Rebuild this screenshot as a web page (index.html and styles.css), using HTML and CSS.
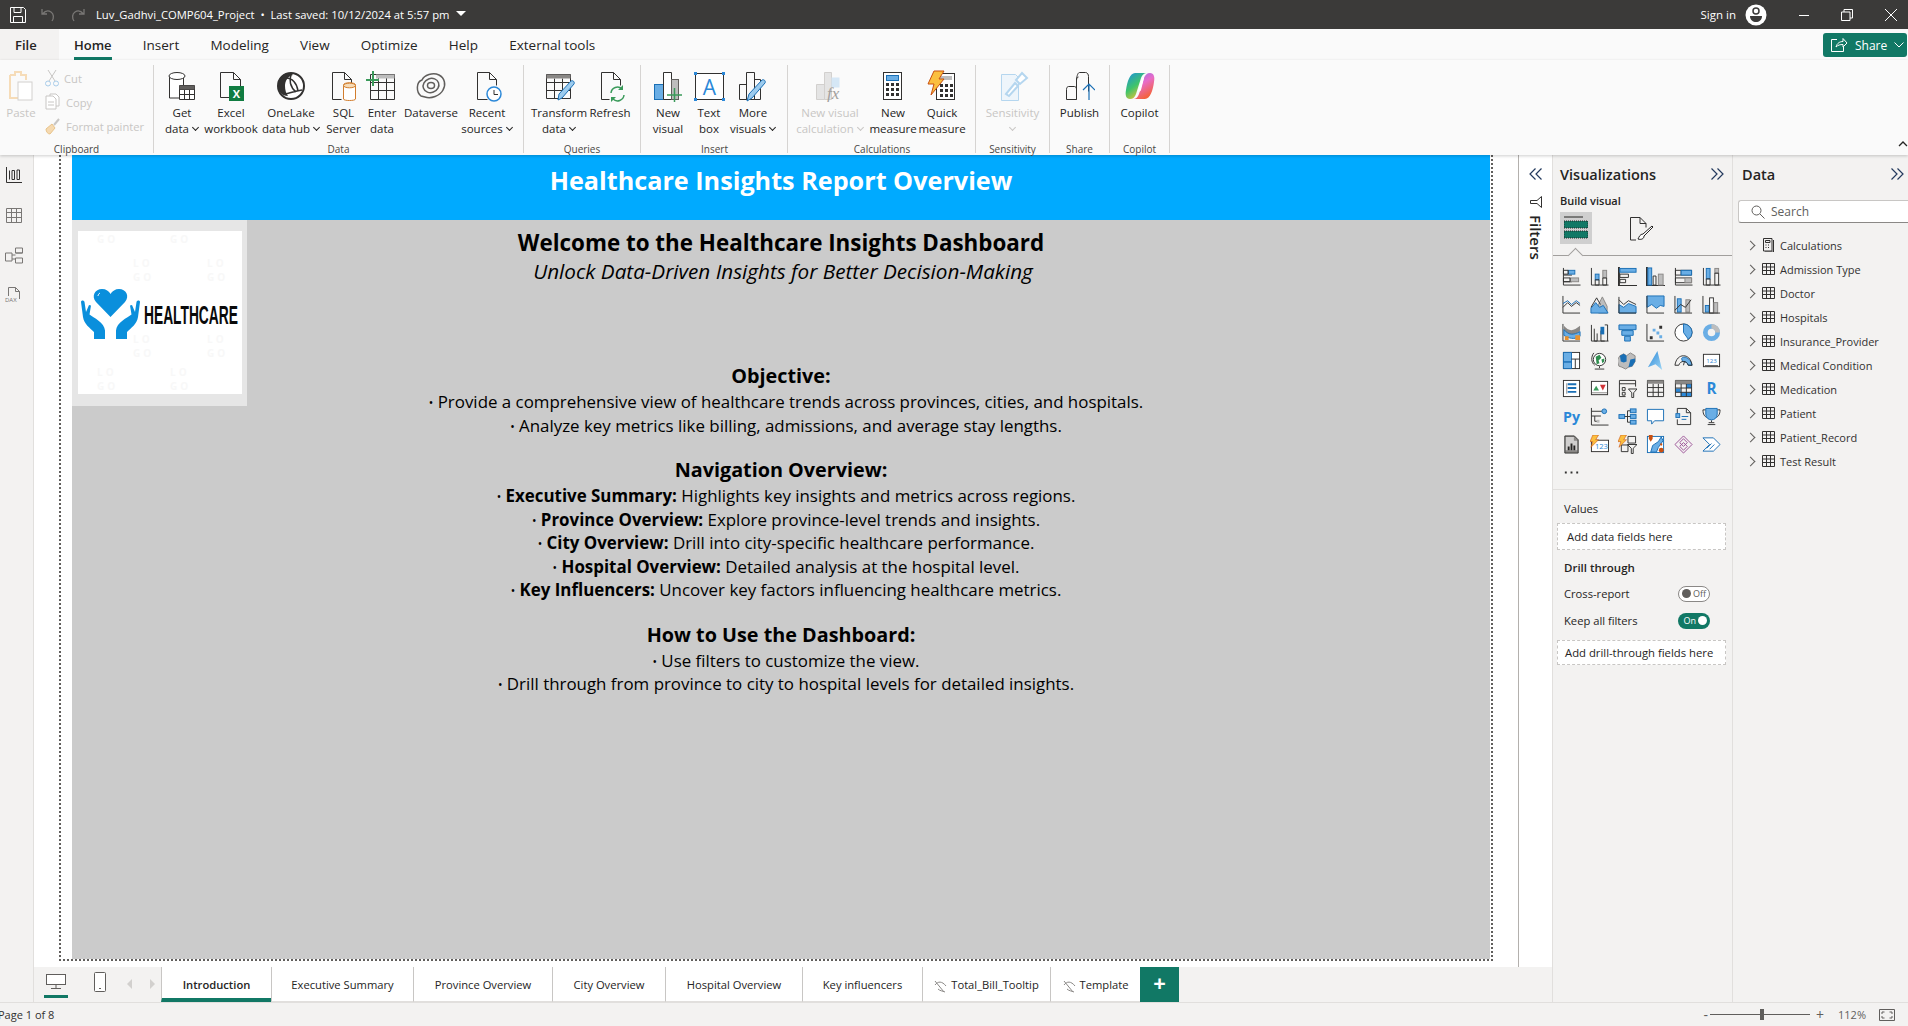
FILE: index.html
```html
<!DOCTYPE html>
<html lang="en">
<head>
    <meta charset="UTF-8">
    <title>Luv_Gadhvi_COMP604_Project</title>
    <link rel="stylesheet" href="styles.css">
</head>
<body>
<header class="titlebar">
    <svg class="tb-icon" width="18" height="18" viewBox="0 0 18 18"><path class="w" d="M1.5 1.5h13l2 2v13h-15zM5 1.5v5h7v-5M4.500 16.500v-6h9v6"/></svg>
    <svg class="tb-icon dim" width="18" height="18" viewBox="0 0 18 18"><path class="d" d="M3 3v5h5M3.500 8C6 5 9 4 12 6c3 2 3 6 1 9"/></svg>
    <svg class="tb-icon dim" width="18" height="18" viewBox="0 0 18 18"><path class="d" d="M15 3v5h-5M14.500 8C12 5 9 4 6 6c-3 2-3 6-1 9"/></svg>
    <span class="doc-title">Luv_Gadhvi_COMP604_Project &nbsp;•&nbsp; Last saved: 10/12/2024 at 5:57 pm</span>
    <span class="doc-caret"></span>
    <span class="sign-in">Sign in</span>
    <svg class="avatar" width="22" height="22" viewBox="0 0 22 22"><circle cx="11" cy="11" r="10.500" fill="#fff"/><circle cx="11" cy="7" r="3" fill="none" stroke="#3b3a39" stroke-width="1.500"/><path d="M5 12h12c0 4-3 6-6 6s-6-2-6-6z" fill="#3b3a39"/></svg>
    <div class="win-btns">
        <svg width="12" height="12" viewBox="0 0 12 12"><path class="w" d="M1 6.500h10"/></svg>
        <svg width="12" height="12" viewBox="0 0 12 12"><path class="w" d="M.5 3h8.500v8.500h-8.500zM3 3V.5h8.500V9H9"/></svg>
        <svg width="14" height="14" viewBox="0 0 14 14"><path class="w" d="M1 1l12 12M13 1L1 13"/></svg>
    </div>
</header>

<nav class="menu">
    <span class="menu-item file">File</span>
    <span class="menu-item active">Home</span>
    <span class="menu-item">Insert</span>
    <span class="menu-item">Modeling</span>
    <span class="menu-item">View</span>
    <span class="menu-item">Optimize</span>
    <span class="menu-item">Help</span>
    <span class="menu-item">External tools</span>
    <button class="share">
        <svg width="18" height="16" viewBox="0 0 18 16"><path class="w" d="M7 2.500H1.500v12h12V10M6 10c1-4 4-5.500 7-5.500V1.500l4 4.500-4 4V7.500C10 7.500 8 8 6 10z"/></svg>
        Share
        <svg width="10" height="6" viewBox="0 0 10 6"><path class="w" d="M.5.500L5 5 9.500.500"/></svg>
    </button>
</nav>

<section class="ribbon">
    <div class="group g-clip">
        <div class="g-row">
            <div class="rb off w42">
                <svg class="ri" width="32" height="32" viewBox="0 0 32 32"><path fill="none" stroke="#f6dcb8" stroke-width="2" d="M5 5h5V2h6v3h5v5M5 5v23h8"/><rect x="13" y="12" width="14" height="18" fill="#fff" stroke="#d2d0ce"/></svg>
                <span>Paste</span>
            </div>
            <div class="clip-col">
                <div class="clip-item"><svg width="14" height="18" viewBox="0 0 14 18"><path fill="none" stroke="#c8c6c4" d="M3 1l7 11M11 1L4 12"/><circle cx="3" cy="14.500" r="2.500" fill="none" stroke="#a9cdea"/><circle cx="11" cy="14.500" r="2.500" fill="none" stroke="#a9cdea"/></svg>Cut</div>
                <div class="clip-item"><svg width="16" height="18" viewBox="0 0 16 18"><path fill="#fff" stroke="#c8c6c4" d="M1 3h7l3 3v10H1zM5 3V1h6l3 3v9h-3M3 9h6M3 12h6"/></svg>Copy</div>
                <div class="clip-item"><svg width="16" height="18" viewBox="0 0 16 18"><path fill="#f5d9b0" stroke="#e8c38a" d="M1 12l6-5 3 4-5 6c-2 0-4-2-4-5z"/><path fill="none" stroke="#c8c6c4" stroke-width="2" d="M9 8l5-6"/></svg>Format painter</div>
            </div>
        </div>
        <div class="g-label">Clipboard</div>
    </div>

    <div class="group g-data">
        <div class="g-row">
            <div class="rb w44">
                <svg class="ri" width="32" height="32" viewBox="0 0 32 32"><path class="k fw" d="M3.500 6v22h14V6"/><ellipse class="k fw" cx="11" cy="6" rx="8" ry="3.500"/><path class="k fw" d="M13.500 15.500h15v14h-15zM13.500 19.500h15M18.500 19.500v10M23.500 19.500v10M13.500 24.500h15"/><path d="M13.500 15.500h15v4h-15z" fill="#605e5c"/></svg>
                <span>Get<br>data <i class="chev"></i></span>
            </div>
            <div class="rb w54">
                <svg class="ri" width="32" height="32" viewBox="0 0 32 32"><path class="k" stroke="#8a8886" d="M5.500 2.500h13l7 7v13M5.500 2.500v25h9M18.500 2.500v7h7"/><rect x="14" y="16" width="15" height="15" fill="#107c41"/><text class="xl" x="21.500" y="28">X</text></svg>
                <span>Excel<br>workbook</span>
            </div>
            <div class="rb w66">
                <svg class="ri" width="32" height="32" viewBox="0 0 32 32"><circle cx="16" cy="16" r="13" fill="#fff" stroke="#323130" stroke-width="2"/><path d="M3 16C3 9 8 3 14 3c2 0 3 1 4 2-5 1-8 6-8 11 0 4 1 7 3 10C7 26 3 21 3 16z" fill="#323130"/><path d="M11 8c6 0 11 5 12 13M10 24c5-1 10-3 17-4M16 5c-2 5-1 12 5 17" fill="none" stroke="#323130" stroke-width="1.500"/></svg>
                <span>OneLake<br>data hub <i class="chev"></i></span>
            </div>
            <div class="rb w39">
                <svg class="ri" width="32" height="32" viewBox="0 0 32 32"><path class="k" d="M4.500 2.500h12l7 7v6M4.500 2.500v27h9M16.500 2.500v7h7"/><path fill="#fff" stroke="#d27d2d" d="M15.500 15c0-3 12-3 12 0v14c0 2-12 2-12 0z"/><ellipse cx="21.500" cy="15.500" rx="6" ry="2.300" fill="#f6dcb8" stroke="#d27d2d"/></svg>
                <span>SQL<br>Server</span>
            </div>
            <div class="rb w38">
                <svg class="ri" width="32" height="32" viewBox="0 0 32 32"><path class="k" d="M4.500 4.500h24v25h-24zM4.500 12.500h24M4.500 20.500h24M12.500 4.500v25M20.500 4.500v25"/><path d="M10 4.500h18.500v4H10z" fill="#bdbdbd"/><path d="M0 10h13M7 1v15" stroke="#3a9a5a" stroke-width="2"/></svg>
                <span>Enter<br>data</span>
            </div>
            <div class="rb w60">
                <svg class="ri" width="32" height="32" viewBox="0 0 32 32"><g fill="none" stroke="#605e5c" stroke-width="1.500"><path d="M6 26C1 22 1 12 7 10 9 5 18 2 24 5c6 3 7 10 4 15-3 6-12 9-18 7z"/><ellipse cx="16" cy="15.500" rx="8" ry="7" transform="rotate(-20 16 15.500)"/><ellipse cx="16" cy="15.500" rx="3.500" ry="3"/></g></svg>
                <span>Dataverse</span>
            </div>
            <div class="rb w52">
                <svg class="ri" width="32" height="32" viewBox="0 0 32 32"><path class="k" d="M6.500 2.500h12l7 7v6M6.500 2.500v27h10M18.500 2.500v7h7"/><circle cx="23" cy="24" r="7" fill="#fff" stroke="#2b88d8" stroke-width="1.500"/><path class="k" d="M23 20v4.500h4"/></svg>
                <span>Recent<br>sources <i class="chev"></i></span>
            </div>
        </div>
        <div class="g-label">Data</div>
    </div>

    <div class="group g-query">
        <div class="g-row">
            <div class="rb w58">
                <svg class="ri" width="32" height="32" viewBox="0 0 32 32"><path class="k" d="M3.500 4.500h24v24h-24zM3.500 12.500h24M3.500 20.500h24M11.500 8.500v20M19.500 8.500v20"/><path d="M3.500 4.500h24v4h-24z" fill="#8a8886"/><path d="M15 30l1-6L28 11c2-1 4 1 3 3L19 28z" fill="#9ccbee" stroke="#1a6fb5"/></svg>
                <span>Transform<br>data <i class="chev"></i></span>
            </div>
            <div class="rb w44">
                <svg class="ri" width="32" height="32" viewBox="0 0 32 32"><path class="k" d="M7.500 2.500h12l7 7v6M7.500 2.500v27h8M19.500 2.500v7h7"/><path fill="none" stroke="#3a9a5a" stroke-width="1.500" d="M17 23a6.500 6.500 0 0 1 11-4M30 25a6.500 6.500 0 0 1-11 4"/><path fill="#3a9a5a" d="M29 15v5h-5zM17 32v-5h5z"/></svg>
                <span>Refresh</span>
            </div>
        </div>
        <div class="g-label">Queries</div>
    </div>

    <div class="group g-insert">
        <div class="g-row">
            <div class="rb w40">
                <svg class="ri" width="32" height="32" viewBox="0 0 32 32"><rect x="2.500" y="14.500" width="9" height="15" fill="#6aaee5" stroke="#1a6fb5"/><path fill="#fff" stroke="#323130" d="M11.500 2.500h8v27h-8z"/><rect x="19.500" y="9.500" width="7" height="20" fill="#bdbdbd" stroke="#605e5c"/><path d="M15 25h15M22.500 18v14" stroke="#3a9a5a" stroke-width="1.500"/></svg>
                <span>New<br>visual</span>
            </div>
            <div class="rb w42">
                <svg class="ri" width="32" height="32" viewBox="0 0 32 32"><rect x="2.500" y="3.500" width="28" height="26" fill="#fff" stroke="#323130"/><path d="M1 2h3v3H1zM29 2h3v3h-3zM1 28h3v3H1zM29 28h3v3h-3z" fill="#2b88d8"/><text class="tbA" x="16.500" y="25">A</text></svg>
                <span>Text<br>box</span>
            </div>
            <div class="rb w46">
                <svg class="ri" width="32" height="32" viewBox="0 0 32 32"><path class="k" d="M2.500 14.500h7v15h-7zM9.500 2.500h8v27h-8zM17.500 9.500h6v20h-6z"/><path d="M10 31l2-7L25 10c2-1 4 1 3 3L15 28z" fill="#9ccbee" stroke="#1a6fb5"/></svg>
                <span>More<br>visuals <i class="chev"></i></span>
            </div>
        </div>
        <div class="g-label">Insert</div>
    </div>

    <div class="group g-calc">
        <div class="g-row">
            <div class="rb off w70">
                <svg class="ri" width="32" height="32" viewBox="0 0 32 32"><path fill="#e4e4e4" stroke="#d2d0ce" d="M2.500 14.500h8v15h-8zM10.500 2.500h7v27h-7z"/><path fill="#d5e7f6" d="M17.500 7.500h8v10h-8z"/><text class="fx" x="13" y="29">fx</text></svg>
                <span>New visual<br>calculation <i class="chev"></i></span>
            </div>
            <div class="rb w56">
                <svg class="ri" width="32" height="32" viewBox="0 0 32 32"><rect x="6.500" y="2.500" width="18" height="27" fill="#fff" stroke="#323130"/><rect x="9.500" y="5.500" width="12" height="5" fill="#6aaee5" stroke="#1a6fb5"/><path d="M9 13h3v3H9zM14 13h3v3h-3zM19 13h3v3h-3zM9 18h3v3H9zM14 18h3v3h-3zM19 18h3v3h-3zM9 23h3v3H9zM14 23h3v3h-3zM19 23h3v3h-3z" fill="#323130"/></svg>
                <span>New<br>measure</span>
            </div>
            <div class="rb w42">
                <svg class="ri" width="32" height="32" viewBox="0 0 32 32"><rect x="10.500" y="3.500" width="18" height="26" fill="#fff" stroke="#323130"/><rect x="13" y="6" width="13" height="4" fill="#bdbdbd"/><path d="M14 14h3v3h-3zM19 14h3v3h-3zM24 14h3v3h-3zM14 19h3v3h-3zM19 19h3v3h-3zM24 19h3v3h-3zM14 24h3v3h-3zM19 24h3v3h-3zM24 24h3v3h-3z" fill="#323130"/><path d="M8 1h10l-5 8h5L5 25l3-11H2z" fill="#fbbf3f" stroke="#ca5010"/></svg>
                <span>Quick<br>measure</span>
            </div>
        </div>
        <div class="g-label">Calculations</div>
    </div>

    <div class="group g-sens">
        <div class="g-row">
            <div class="rb off">
                <svg class="ri" width="32" height="32" viewBox="0 0 32 32"><path fill="#eef5fb" stroke="#b5d6ef" d="M4.500 4.500h14l3 3v23h-17z"/><path fill="#fff" stroke="#b5d6ef" stroke-width="2" d="M9 24l9-11 3 3-9 10zM19 10l6-7 5 5-7 6z"/></svg>
                <span>Sensitivity<br><i class="chev"></i></span>
            </div>
        </div>
        <div class="g-label">Sensitivity</div>
    </div>

    <div class="group g-share">
        <div class="g-row">
            <div class="rb">
                <svg class="ri" width="32" height="32" viewBox="0 0 32 32"><path class="k" d="M3.500 19.500c0-2 1-3 2-3h6c1 0 2 1 2 3v10h-10zM13.500 29.500V10c0-2 1-3 2-3M13.500 10c0-2 1-7.500 3-7.500h6c2 0 3 2 3 4v15"/><path d="M26 30V14M20 20l6-6 6 6" fill="none" stroke="#1a6fb5" stroke-width="1.200"/></svg>
                <span>Publish</span>
            </div>
        </div>
        <div class="g-label">Share</div>
    </div>

    <div class="group g-copilot">
        <div class="g-row">
            <div class="rb">
                <svg class="ri" width="32" height="32" viewBox="0 0 32 32"><defs><linearGradient id="cpa" x1="0" y1="0" x2="0.600" y2="1"><stop offset="0" stop-color="#1b8fe0"/><stop offset=".55" stop-color="#3fc46b"/><stop offset="1" stop-color="#f2c230"/></linearGradient><linearGradient id="cpb" x1="0" y1="0" x2="0.500" y2="1"><stop offset="0" stop-color="#8a6df0"/><stop offset=".5" stop-color="#e86cc8"/><stop offset="1" stop-color="#f4623c"/></linearGradient></defs><path d="M11 3h12c-3 0-5 2-6 5l-5 16c-1 3-3 5-6 5-4 0-5-4-4-9 1-8 4-17 9-17z" fill="url(#cpa)"/><path d="M21 29H9c3 0 5-2 6-5l5-16c1-3 3-5 6-5 4 0 5 4 4 9-1 8-4 17-9 17z" fill="url(#cpb)"/><path d="M14 21l4-12c.5-1.500 2-2 2-1l-3 12c-.5 1.500-3 2.500-3 1z" fill="#fff"/></svg>
                <span>Copilot</span>
            </div>
        </div>
        <div class="g-label">Copilot</div>
    </div>

    <svg class="collapse" width="10" height="6" viewBox="0 0 10 6"><path d="M1 5l4-4 4 4" fill="none" stroke="#252423" stroke-width="1.300"/></svg>
</section>

<main class="workspace">
    <aside class="rail">
        <svg width="18" height="18" viewBox="0 0 18 18"><path class="k" stroke="#252423" d="M1.500 1v15.500H17M4.500 4.500v9M7 4.500h2.500v9H7zM12 4h2.500v9.500H12z"/></svg>
        <svg width="18" height="18" viewBox="0 0 18 18"><path class="gr" d="M1.500 2.500h15v14h-15zM1.500 6.500h15M1.500 11.500h15M6.500 2.500v14M11.500 2.500v14"/></svg>
        <svg width="18" height="18" viewBox="0 0 18 18"><path class="gr" d="M.5 7h6.500v8H.5zM10.500 2h7v5h-7zM10.500 7h7M10.500 12h7v5h-7zM7 9h3.500M7 13h3.500"/></svg>
        <svg width="18" height="18" viewBox="0 0 18 18"><path class="gr" d="M3.500 10V1.500h7l4 4V13M10.500 1.500v4h4"/><text class="dax" x="0" y="15.500">DAX</text></svg>
    </aside>

    <div class="center">
        <div class="upper">
            <div class="canvas">
                <div class="page-frame">
                    <div class="page">
                        <div class="page-title">Healthcare Insights Report Overview</div>
                        <div class="logo-box">
                            <svg width="164" height="163" viewBox="0 0 164 163">
                                <rect width="164" height="163" fill="#fff"/>
                                <g class="mark">
                                    <text x="19" y="12">GO</text><text x="92" y="12">GO</text>
                                    <text x="55" y="36">LO</text><text x="129" y="36">LO</text>
                                    <text x="55" y="50">GO</text><text x="129" y="50">GO</text>
                                    <text x="55" y="112">LO</text><text x="129" y="112">LO</text>
                                    <text x="55" y="126">GO</text><text x="129" y="126">GO</text>
                                    <text x="19" y="145">LO</text><text x="92" y="145">LO</text>
                                    <text x="19" y="159">GO</text><text x="92" y="159">GO</text>
                                </g>
                                <path d="M32.500 86L18 71c-5-6-1-13 6-13 4 0 7 2 8.500 5 1.500-3 5-5 8.500-5 7 0 11 7 6 13z" fill="#0a8fdc"/>
                                <path d="M22 62c-1 .5-2 2-2 3" stroke="#fff" fill="none"/>
                                <path d="M3 71c0-2 3-2 3.500 0L8 81l3-7 2 .5-1.500 9c4 3 15 8 15.500 16v8.500H16V101C12 97 6 93 5 86z" fill="#0a8fdc"/>
                                <path d="M62 71c0-2-3-2-3.500 0L57 81l-3-7-2 .5 1.500 9c-4 3-15 8-15.500 16v8.500h11V101c4-4 10-8 11-15z" fill="#0a8fdc"/>
                                <text class="logo-word" transform="translate(66 93) scale(.53 1)">HEALTHCARE</text>
                            </svg>
                        </div>
                        <div class="intro">
                            <h1>Welcome to the Healthcare Insights Dashboard</h1>
                            <p class="tagline">Unlock Data-Driven Insights for Better Decision-Making</p>
                            <h2 class="objective">Objective:</h2>
                            <p><span class="dot">•</span> Provide a comprehensive view of healthcare trends across provinces, cities, and hospitals.</p>
                            <p><span class="dot">•</span> Analyze key metrics like billing, admissions, and average stay lengths.</p>
                            <h2>Navigation Overview:</h2>
                            <p><span class="dot">•</span> <b>Executive Summary:</b> Highlights key insights and metrics across regions.</p>
                            <p><span class="dot">•</span> <b>Province Overview:</b> Explore province-level trends and insights.</p>
                            <p><span class="dot">•</span> <b>City Overview:</b> Drill into city-specific healthcare performance.</p>
                            <p><span class="dot">•</span> <b>Hospital Overview:</b> Detailed analysis at the hospital level.</p>
                            <p><span class="dot">•</span> <b>Key Influencers:</b> Uncover key factors influencing healthcare metrics.</p>
                            <h2>How to Use the Dashboard:</h2>
                            <p><span class="dot">•</span> Use filters to customize the view.</p>
                            <p><span class="dot">•</span> Drill through from province to city to hospital levels for detailed insights.</p>
                        </div>
                    </div>
                </div>
            </div>
            <div class="filters">
                <svg width="14" height="12" viewBox="0 0 14 12"><path class="nv" d="M6.500.5L1 6l5.500 5.500M12.500.5L7 6l5.500 5.500"/></svg>
                <svg class="funnel" width="14" height="14" viewBox="0 0 14 14"><path class="k" stroke="#252423" d="M12.500 1.500v11L8 8.500H1.500v-3H8z"/></svg>
                <span class="filters-text">Filters</span>
            </div>
        </div>
        <div class="pagebar">
            <div class="pagebar-tools">
                <span class="device on"><svg width="20" height="15" viewBox="0 0 20 15"><rect x=".5" y=".5" width="19" height="10" fill="#fff" stroke="#605e5c"/><path d="M10 10.500V14M5 14.500h10" stroke="#605e5c"/></svg></span>
                <span class="device phone"><svg width="12" height="20" viewBox="0 0 12 20"><rect x=".5" y=".5" width="11" height="19" rx="1" fill="#fff" stroke="#605e5c"/><path d="M5 16h2v1H5z" fill="#605e5c"/></svg></span>
                <span class="nav-tri left"></span>
                <span class="nav-tri right"></span>
            </div>
            <div class="ptab t1 active">Introduction</div>
            <div class="ptab t2">Executive Summary</div>
            <div class="ptab t3">Province Overview</div>
            <div class="ptab t4">City Overview</div>
            <div class="ptab t5">Hospital Overview</div>
            <div class="ptab t6">Key influencers</div>
            <div class="ptab t7"><svg class="hid" width="13" height="13" viewBox="0 0 13 13"><path d="M1 5c3-4 7-4 11 1M1 1l9 11M4 9c2 2 5 2 7 3" fill="none" stroke="#8a8886"/></svg>Total_Bill_Tooltip</div>
            <div class="ptab t8"><svg class="hid" width="13" height="13" viewBox="0 0 13 13"><path d="M1 5c3-4 7-4 11 1M1 1l9 11M4 9c2 2 5 2 7 3" fill="none" stroke="#8a8886"/></svg>Template</div>
            <div class="ptab-add">+</div>
        </div>
    </div>

    <aside class="viz">
        <div class="pane-head">
            <span>Visualizations</span>
            <svg width="14" height="12" viewBox="0 0 14 12"><path class="nv" d="M1.500.5L7 6l-5.500 5.500M7.500.5L13 6l-5.500 5.500"/></svg>
        </div>
        <div class="build-label">Build visual</div>
        <div class="build-tabs">
            <span class="bt on"><svg width="24" height="24" viewBox="0 0 24 24"><path d="M0 1h19" stroke="#252423"/><rect y="5" width="24" height="7" fill="#117865" stroke="#252423" stroke-dasharray="1 1"/><rect y="15" width="24" height="7" fill="#117865" stroke="#252423" stroke-dasharray="1 1"/></svg></span>
            <span class="bt"><svg width="25" height="25" viewBox="0 0 25 25"><path class="k" stroke="#252423" d="M1.500 24V1.500H11l6 6v4M11 1.500v6h6M1.500 24H7"/><path d="M9 23c3 1 6 0 6-3l9-9-1-1-9 8c-3 0-4 3-5 5z" fill="#fff" stroke="#252423"/></svg></span>
        </div>
        <div class="build-rule"><span class="notch"></span></div>
        <div class="viz-grid">
            <!-- bars -->
            <svg viewBox="0 0 20 20"><path class="k" d="M1.500 1v18h18M1.500 8.500h9M1.500 15.500h9"/><rect class="bl" x="6.500" y="3.500" width="7" height="4"/><rect class="gy" x="8.500" y="11.500" width="9" height="4"/><path class="k" d="M1.500 3.500h5v4h-5zM1.500 11.500h7v4h-7z"/></svg>
            <svg viewBox="0 0 20 20"><path class="k" d="M1.500 1v18h18"/><rect class="bl" x="5.500" y="7.500" width="4" height="6"/><path class="k" d="M5.500 13.500h4v5.500h-4z"/><rect class="gy" x="13.500" y="3.500" width="4" height="8"/><path class="k" d="M13.500 11.500h4v7.500h-4z"/></svg>
            <svg viewBox="0 0 20 20"><path class="k" stroke="#8a8886" stroke-width="2" d="M1 0v20h20"/><rect class="bl" x="2" y="1.500" width="17" height="4"/><path class="k" d="M2 7.500h9v3.500H2zM2 13h6v3.500H2z"/></svg>
            <svg viewBox="0 0 20 20"><path class="k" stroke="#8a8886" stroke-width="2" d="M1 0v20h20"/><rect class="bl" x="2" y="1" width="4" height="18"/><path class="k" d="M7.500 9.500h3v9.500h-3z"/><rect class="gy" x="13" y="7.500" width="5" height="11.500"/></svg>
            <svg viewBox="0 0 20 20"><path class="k" d="M1.500 1v18h18M1.500 3.500h17v5h-17zM1.500 11.500h17v5h-17zM7.500 3.500v5"/><rect class="bl" x="7.500" y="3.500" width="11" height="5"/><rect class="gy" x="11.500" y="11.500" width="7" height="5"/></svg>
            <svg viewBox="0 0 20 20"><path class="k" d="M1.500 1v18h18"/><rect class="bl" x="4.500" y="1.500" width="4" height="11"/><path class="k" d="M4.500 12.500h4v6.500h-4z"/><rect class="gy" x="13.500" y="1.500" width="4" height="5"/><path class="k" d="M13.500 6.500h4v12.500h-4z"/></svg>
            <!-- lines and areas -->
            <svg viewBox="0 0 20 20"><path class="k" d="M1 1v18h18M1 13l5-5 4 4 5-4 4 3"/><path d="M1 9l5-3 4 4 5-4 4 3" fill="none" stroke="#1a6fb5"/></svg>
            <svg viewBox="0 0 20 20"><path class="gy" d="M9 10l4-8 5 10v7H9z"/><path class="bl" d="M1 19v-5l5-6 4 5 4-2 5 8z"/><path class="k" d="M1 13l6-10 4 7"/></svg>
            <svg viewBox="0 0 20 20"><path class="bl" d="M1 10l5 3 5-4 8 3v7H1z"/><path class="k" d="M1 2v17h18M1 5l5 5 5-4 8 4" stroke="#1a6fb5"/></svg>
            <svg viewBox="0 0 20 20"><path class="bl" d="M1 1h18v11l-4-1-4 3-5-4-5 3z"/><path class="k" d="M1 1v18h18"/></svg>
            <svg viewBox="0 0 20 20"><rect class="bl" x="3.500" y="4" width="4" height="14"/><rect class="gy" x="12.500" y="5" width="4" height="13"/><path class="k" d="M1 1v18h18M1 16l6-6 5 3 6-8"/></svg>
            <svg viewBox="0 0 20 20"><rect class="bl" x="3.500" y="11" width="4" height="7"/><rect x="8" y="3" width="4" height="16" fill="#fff" stroke="#323130"/><rect class="gy" x="12.500" y="8" width="4" height="11"/><path class="k" d="M1 1v18h18"/></svg>
            <!-- ribbon, waterfall, funnel, scatter, pie, donut -->
            <svg viewBox="0 0 20 20"><path class="k" d="M1 1v18h18"/><path d="M2 3c5 6 10 6 17 0v5C13 15 7 13 2 8z" fill="#8a8886"/><path class="bl" d="M2 7c5 6 10 6 17 2v5c-6 4-12 2-17-1z"/><path d="M3 14h4v4H3zM14 13h5v5h-5z" fill="#e8912d"/></svg>
            <svg viewBox="0 0 20 20"><path class="k" d="M1.500 2v17h18M4.500 6v13h3M7.500 11v8M11.500 8v11h4M15.500 2h3v17"/><rect x="11" y="4" width="4" height="8" fill="#1a6fb5"/></svg>
            <svg viewBox="0 0 20 20"><path class="bl" d="M1 2h18v5H1zM4 8h12v5H4zM7 14h6v5H7z"/></svg>
            <svg viewBox="0 0 20 20"><path class="k" d="M1 1v18h18"/><path d="M14 3h3v3h-3zM4 14h3v3H4z" fill="#323130"/><path d="M7 6h3v3H7zM11 9h3v3h-3zM14 13h3v3h-3z" fill="#6aaee5"/></svg>
            <svg viewBox="0 0 20 20"><circle cx="10" cy="10" r="9" fill="#fff" stroke="#323130"/><path class="bl" d="M10 1a9 9 0 0 1 9 9 9 9 0 0 1-4 7l-5-7z"/></svg>
            <svg viewBox="0 0 20 20"><circle cx="10" cy="10" r="6.500" fill="none" stroke="#6aaee5" stroke-width="5"/><path d="M10 1a9 9 0 0 1 9 9h-5a4 4 0 0 0-4-4z" fill="#bdbdbd"/></svg>
            <!-- maps, gauge, card -->
            <svg viewBox="0 0 20 20"><rect x="1.500" y="1.500" width="17" height="17" fill="#fff" stroke="#323130"/><path class="bl" d="M1.500 1.500H10v10H1.500zM1.500 11.500H10v7H1.500z"/><path class="k" d="M10 8.500h8.500M14 8.500v10"/></svg>
            <svg viewBox="0 0 20 20"><circle cx="10" cy="9" r="6.500" fill="#fff" stroke="#323130"/><path d="M6 6l4-2 2 3-3 3 1 3-3 1zM12 9l3-1v3l-2 2z" fill="#2f8f4f"/><path class="k" d="M4 2c-3 4-3 10 1 13M10 16v2M5 19h10"/></svg>
            <svg viewBox="0 0 20 20"><path class="gy" d="M2 5l4-2 3 2 4-3 5 3v6l-3 5-4 1-3 2-4-2-3-1-2-6z"/><path d="M2 5l4-2 3 2v6l-3 1-3-1z" fill="#1a6fb5"/><path d="M13 9l5-1v3l-3 5-4 1z" fill="#1a6fb5"/></svg>
            <svg viewBox="0 0 20 20"><defs><linearGradient id="az" x1="0" y1="0" x2="1" y2="1"><stop offset="0" stop-color="#2b88d8"/><stop offset="1" stop-color="#9fd6f5"/></linearGradient></defs><path d="M12 0L2 17l8-3 7 6z" fill="url(#az)"/></svg>
            <svg viewBox="0 0 20 20"><path class="bl" d="M8 8c1-3 9-2 11 7h-4c-1-3-3-4-6-4z"/><path class="k" d="M1 15C2 8 6 5 10 5s8 3 9 10h-4c-1-3-3-4-5-4s-4 1-5 4zM10 15l1-4"/></svg>
            <svg viewBox="0 0 20 20"><rect x="1.500" y="3.500" width="17" height="13" fill="#fff" stroke="#323130"/><text class="num" x="10" y="13">123</text><path class="k" d="M3 15.500h14" stroke="#8a8886"/></svg>
            <!-- multi card, kpi, slicer, table, matrix, r -->
            <svg viewBox="0 0 20 20"><rect x="1.500" y="1.500" width="17" height="17" fill="#fff" stroke="#323130"/><path d="M5 4.500v11" stroke="#8a8886"/><path d="M6 5.500h9M6 9.500h9M6 13.500h9" stroke="#1a6fb5" stroke-width="2"/></svg>
            <svg viewBox="0 0 20 20"><rect x="1.500" y="2.500" width="17" height="14" fill="#fff" stroke="#323130"/><path d="M3.500 12l3-5 3 5z" fill="#3a9a5a"/><path d="M10.500 6h6l-3 6z" fill="#d13438"/><path d="M2 14.500h16" stroke="#8a8886"/></svg>
            <svg viewBox="0 0 20 20"><path class="k" d="M8 18.500H1.500v-17h17V8M1.500 5h17M4.500 9h3v3h-3zM4.500 14h3v3h-3zM11 10.500h9l-3.500 4v5H14.500v-5z"/></svg>
            <svg viewBox="0 0 20 20"><path class="k" d="M1.500 1.500h17v17h-17zM1.500 9h17M1.500 14h17M7.500 5v13.500M13 5v13.500"/><rect x="1.500" y="1.500" width="17" height="3.500" fill="#8a8886"/></svg>
            <svg viewBox="0 0 20 20"><path d="M13 5h5.500v4.500H13zM1.500 10h5.500v4H1.500zM7 14h6v4.500H7zM13 14h5.500v4.500H13z" fill="#2b88d8"/><path class="k" d="M1.500 1.500h17v17h-17zM1.500 5h17M1.500 9.500h17M1.500 14h17M7.500 5v13.500M13 5v13.500"/><rect x="1.500" y="1.500" width="17" height="3.500" fill="#8a8886"/></svg>
            <svg viewBox="0 0 20 20"><text class="lang" x="10" y="16">R</text></svg>
            <!-- py, influencers, tree, qna, narrative, goals -->
            <svg viewBox="0 0 20 20"><text class="lang py" x="10" y="16">Py</text></svg>
            <svg viewBox="0 0 20 20"><path class="k" d="M1.500 1v18h18M1.500 4.500h12M1.500 9.500h10M5 9.500V15h3"/><circle cx="15" cy="4.500" r="2.500" fill="#6aaee5" stroke="#1a6fb5"/><rect x="7" y="13.500" width="3" height="3" fill="#bdbdbd"/></svg>
            <svg viewBox="0 0 20 20"><rect class="bl" x="1" y="8" width="6" height="4"/><rect class="bl" x="13" y="2" width="6" height="4"/><rect class="bl" x="13" y="8" width="6" height="4"/><rect class="bl" x="13" y="14" width="6" height="4"/><path class="k" d="M7 10h6M10 4v12h3M10 4h3"/></svg>
            <svg viewBox="0 0 20 20"><path fill="#fff" stroke="#1a6fb5" d="M1.500 2.500h17v12H9l-3 3.500v-3.500H1.500z"/></svg>
            <svg viewBox="0 0 20 20"><path class="k" fill="#fff" d="M3.500 7V1.500H13L17.500 6v12.500h-14V13M13 1.500V6h4.500"/><rect class="bl" x="2" y="7" width="4" height="4"/><path d="M8 10h7M8 13h5" stroke="#1a6fb5"/></svg>
            <svg viewBox="0 0 20 20"><path class="k" d="M4 3H1c0 5 2 7 4 8M16 3h3c0 5-2 7-4 8M10 14v2M6 18.500h8M7 16.500h6"/><path class="bl" d="M4 1.500h12v6c0 4-3 6-6 6s-6-2-6-6z"/></svg>
            <!-- paginated, smart ones -->
            <svg viewBox="0 0 20 20"><path fill="#8a8886" stroke="#323130" d="M3 1h10l4 4v14H3z"/><path d="M4 4v12h12V6h-3.500V2H4z" fill="#fff" opacity=".6"/><path d="M6 16v-4h2v4zM9 16V9h2v7zM12 16v-5h2v5z" fill="#252423"/></svg>
            <svg viewBox="0 0 20 20"><rect x="1.500" y="5.500" width="18" height="12" fill="#fff" stroke="#323130"/><text class="num big" x="12" y="15">123</text><path d="M3 0h6L6 5h3L1 13l2-6H0z" fill="#fbbf3f" stroke="#ca5010" stroke-width=".6"/></svg>
            <svg viewBox="0 0 20 20"><path class="k" stroke="#8a8886" d="M10.500 1.500h8v7h-8zM3.500 10.500h7v7h-7z"/><path class="k" d="M10 10h10l-4 4v5.500h-2V14z"/><path d="M3 0h6L6 5h3L1 13l2-6H0z" fill="#fbbf3f" stroke="#ca5010" stroke-width=".6"/></svg>
            <svg viewBox="0 0 20 20"><rect x="1.500" y="1.500" width="17" height="17" fill="#fff" stroke="#1a6fb5"/><path class="bl" d="M5 18l2-7 6-4 3-5 2 4-5 7-2 5z"/><path d="M3 0h4v4l-2 3-2-3z" fill="#ca5010"/><circle cx="16" cy="16" r="2.500" fill="#ca5010"/><circle cx="16" cy="10" r="1.200" fill="#ca5010"/></svg>
            <svg viewBox="0 0 20 20"><path fill="none" stroke="#9b4f96" d="M10 1l9 9-9 9-9-9zM10 4L6 8l4 4 4-4zM10 8l-4 4 4 4 4-4z"/></svg>
            <svg viewBox="0 0 20 20"><path fill="#fff" stroke="#1a6fb5" d="M1 3h11l7 7-7 7H1l7-7zM5 14l5-5M8 15l5-5"/></svg>
            <svg class="dots" viewBox="0 0 20 20"><path d="M3 9h2v2H3zM9 9h2v2H9zM15 9h2v2h-2z" fill="#323130"/></svg>
        </div>
        <div class="wells">
            <div class="well-title">Values</div>
            <div class="well">Add data fields here</div>
            <div class="drill-title">Drill through</div>
            <div class="opt"><span>Cross-report</span><span class="toggle off"><i></i>Off</span></div>
            <div class="opt"><span>Keep all filters</span><span class="toggle on">On<i></i></span></div>
            <div class="well small">Add drill-through fields here</div>
        </div>
    </aside>

    <aside class="data">
        <div class="pane-head">
            <span>Data</span>
            <svg width="14" height="12" viewBox="0 0 14 12"><path class="nv" d="M1.500.5L7 6l-5.500 5.500M7.500.5L13 6l-5.500 5.500"/></svg>
        </div>
        <div class="search">
            <svg width="14" height="14" viewBox="0 0 14 14"><circle cx="5.500" cy="5.500" r="4.500" fill="none" stroke="#605e5c"/><path d="M9 9l4.500 4.500" stroke="#605e5c"/></svg>
            <span>Search</span>
        </div>
        <ul class="tables">
            <li><i class="tchev"></i><svg width="13" height="14" viewBox="0 0 13 14"><path class="k" d="M1.500.5h8.500v12.500H1.500zM3.500 2.500h4.500v2H3.500zM3.500 7h1M6 7h1M3.500 9.500h1M6 9.500h1M11.500 2v12H3"/></svg>Calculations</li>
            <li><i class="tchev"></i><svg width="13" height="12" viewBox="0 0 13 12"><path class="k" d="M.5.500h12v11H.5zM.5 4h12M.5 7.500h12M4.500.5v11M8.500.5v11"/></svg>Admission Type</li>
            <li><i class="tchev"></i><svg width="13" height="12" viewBox="0 0 13 12"><path class="k" d="M.5.500h12v11H.5zM.5 4h12M.5 7.500h12M4.500.5v11M8.500.5v11"/></svg>Doctor</li>
            <li><i class="tchev"></i><svg width="13" height="12" viewBox="0 0 13 12"><path class="k" d="M.5.500h12v11H.5zM.5 4h12M.5 7.500h12M4.500.5v11M8.500.5v11"/></svg>Hospitals</li>
            <li><i class="tchev"></i><svg width="13" height="12" viewBox="0 0 13 12"><path class="k" d="M.5.500h12v11H.5zM.5 4h12M.5 7.500h12M4.500.5v11M8.500.5v11"/></svg>Insurance_Provider</li>
            <li><i class="tchev"></i><svg width="13" height="12" viewBox="0 0 13 12"><path class="k" d="M.5.500h12v11H.5zM.5 4h12M.5 7.500h12M4.500.5v11M8.500.5v11"/></svg>Medical Condition</li>
            <li><i class="tchev"></i><svg width="13" height="12" viewBox="0 0 13 12"><path class="k" d="M.5.500h12v11H.5zM.5 4h12M.5 7.500h12M4.500.5v11M8.500.5v11"/></svg>Medication</li>
            <li><i class="tchev"></i><svg width="13" height="12" viewBox="0 0 13 12"><path class="k" d="M.5.500h12v11H.5zM.5 4h12M.5 7.500h12M4.500.5v11M8.500.5v11"/></svg>Patient</li>
            <li><i class="tchev"></i><svg width="13" height="12" viewBox="0 0 13 12"><path class="k" d="M.5.500h12v11H.5zM.5 4h12M.5 7.500h12M4.500.5v11M8.500.5v11"/></svg>Patient_Record</li>
            <li><i class="tchev"></i><svg width="13" height="12" viewBox="0 0 13 12"><path class="k" d="M.5.500h12v11H.5zM.5 4h12M.5 7.500h12M4.500.5v11M8.500.5v11"/></svg>Test Result</li>
        </ul>
    </aside>
</main>

<footer class="status">
    <span class="page-count">Page 1 of 8</span>
    <div class="zoom">
        <span class="z-sign">-</span>
        <span class="slider"><i></i></span>
        <span class="z-sign">+</span>
        <span class="z-val">112%</span>
        <svg width="16" height="12" viewBox="0 0 16 12"><path d="M.5.500h15v11H.5z" fill="none" stroke="#605e5c"/><path d="M3 5V3h2.500M10.500 3H13v2M3 7v2h2.500M10.500 9H13V7" fill="none" stroke="#605e5c"/></svg>
    </div>
</footer>
</body>
</html>
```

FILE: styles.css
```css
* {
    box-sizing: border-box;
}

html, body {
    margin: 0;
    height: 100%;
}

body {
    width: 1908px;
    height: 1026px;
    overflow: hidden;
    display: flex;
    flex-direction: column;
    font-family: "Open Sans", "Noto Sans", sans-serif;
    font-size: 12px;
    color: #252423;
    background-color: #f3f2f1;
}

/* shared svg strokes */
.w { fill: none; stroke: #fff; }
.d { fill: none; stroke: #797775; stroke-width: 1.3; }
.k { fill: none; stroke: #323130; }
.fw { fill: #fff; }
.gr { fill: none; stroke: #797775; }
.nv { fill: none; stroke: #243a5e; stroke-width: 1.2; }
.bl { fill: #6aaee5; stroke: #1a6fb5; }
.gy { fill: #bdbdbd; stroke: #8a8886; }

/* title bar */
.titlebar {
    height: 29px;
    flex: none;
    display: flex;
    align-items: center;
    padding-left: 9px;
    background-color: #3b3a39;
    color: #fff;
}

.tb-icon {
    margin-right: 12px;
}

.doc-title {
    margin-left: -3px;
    font-size: 11.250px;
    white-space: nowrap;
}

.doc-caret {
    width: 0;
    height: 0;
    margin: -3px 0 0 6px;
    border-left: 5px solid transparent;
    border-right: 5px solid transparent;
    border-top: 5px solid #fff;
}

.sign-in {
    margin-left: auto;
    font-size: 11.500px;
}

.avatar {
    margin-left: 9px;
}

.win-btns {
    display: flex;
    align-items: center;
    margin-left: 31px;
    margin-right: 10px;
    gap: 31px;
}

/* menu */
.menu {
    height: 31px;
    flex: none;
    display: flex;
    align-items: stretch;
    background-color: #fafafa;
    font-size: 13.500px;
}

.menu-item {
    display: flex;
    align-items: center;
    margin-right: 31.200px;
    white-space: nowrap;
}

.menu-item.file {
    width: 59px;
    margin-right: 15px;
    padding-left: 15px;
    font-size: 13px;
    font-weight: 600;
    background-color: #f3f2f1;
}

.menu-item.active {
    font-size: 13px;
    font-weight: 600;
    padding-top: 3px;
    border-bottom: 3px solid #117865;
}

.share {
    display: flex;
    align-items: center;
    gap: 7px;
    height: 24px;
    width: 84px;
    margin: 4px 1px 0 auto;
    padding: 0 0 0 7px;
    border: none;
    border-radius: 3px;
    background-color: #117865;
    color: #fff;
    font-family: inherit;
    font-size: 12px;
}

/* ribbon */
.ribbon {
    position: relative;
    z-index: 2;
    height: 95px;
    flex: none;
    display: flex;
    padding-top: 5px;
    background-color: #fafafa;
    box-shadow: 0 1px 3px rgba(0, 0, 0, 0.2);
}

.group {
    height: 88px;
    display: flex;
    flex-direction: column;
    border-right: 1px solid #d6d4d2;
}

.g-clip { width: 154px; }
.g-data { width: 370px; padding-left: 6px; }
.g-query { width: 117px; padding-left: 6px; }
.g-insert { width: 147px; padding-left: 7px; }
.g-calc { width: 188px; padding-left: 7px; }
.g-sens { width: 74px; }
.g-share { width: 60px; }
.g-copilot { width: 60px; }

.g-row {
    height: 78px;
    display: flex;
    justify-content: flex-start;
}

.g-sens .g-row, .g-share .g-row, .g-copilot .g-row {
    justify-content: center;
}

.g-label {
    height: 10px;
    line-height: 12px;
    margin-left: -6px;
    text-align: center;
    font-size: 10px;
    color: #484644;
}

.g-clip .g-label, .g-sens .g-label, .g-share .g-label, .g-copilot .g-label {
    margin-left: 0;
}

.rb {
    display: flex;
    flex-direction: column;
    align-items: center;
    padding-top: 5px;
    text-align: center;
    font-size: 11.500px;
    line-height: 16px;
    white-space: nowrap;
}

.rb span {
    margin-top: 3px;
}

.rb.off {
    color: #c8c6c4;
}

.w39 { width: 39px; }
.w38 { width: 38px; }
.w40 { width: 40px; }
.w42 { width: 42px; }
.w44 { width: 44px; }
.w46 { width: 46px; }
.w52 { width: 52px; }
.w54 { width: 54px; }
.w56 { width: 56px; }
.w58 { width: 58px; }
.w60 { width: 60px; }
.w66 { width: 66px; }
.w70 { width: 70px; }

.chev {
    display: inline-block;
    width: 5px;
    height: 5px;
    margin: 0 1px 3px 1px;
    border-right: 1px solid currentColor;
    border-bottom: 1px solid currentColor;
    transform: rotate(45deg);
}

.clip-col {
    display: flex;
    flex-direction: column;
    gap: 6px;
    margin-left: 3px;
    padding-top: 4px;
    color: #c8c6c4;
    font-size: 11.200px;
}

.clip-item {
    display: flex;
    align-items: center;
    gap: 5px;
    height: 18px;
    white-space: nowrap;
}

.collapse {
    position: absolute;
    right: 0;
    bottom: 8px;
}

.xl { font: 700 11px "Open Sans", sans-serif; fill: #fff; text-anchor: middle; }
.tbA { font: 400 21px "Open Sans", sans-serif; fill: #2b88d8; text-anchor: middle; }
.fx { font: italic 400 17px "Liberation Serif", serif; fill: #a19f9d; }

/* main area */
.workspace {
    height: 847px;
    flex: none;
    display: flex;
}

.rail {
    width: 34px;
    flex: none;
    display: flex;
    flex-direction: column;
    align-items: center;
    gap: 22px;
    padding-top: 11px;
    padding-right: 5px;
    background-color: #f3f2f1;
    border-right: 1px solid #e1dfdd;
}

.dax { font: 400 6px "Open Sans", sans-serif; fill: #797775; }

.center {
    width: 1518px;
    flex: none;
    display: flex;
    flex-direction: column;
}

.upper {
    height: 812px;
    flex: none;
    display: flex;
}

.canvas {
    width: 1484px;
    flex: none;
    padding-left: 25px;
    background-color: #fff;
}

.page-frame {
    width: 1434px;
    height: 806px;
    padding-left: 11px;
    border-left: 2px dotted #605e5c;
    border-right: 2px dotted #605e5c;
    border-bottom: 2px dotted #605e5c;
}

.page {
    position: relative;
    height: 804px;
    width: 1418px;
    background-color: #cbcbcb;
    color: #000;
}

.page-title {
    height: 65px;
    line-height: 50px;
    text-align: center;
    font-size: 25.200px;
    font-weight: 700;
    color: #fff;
    background-color: #00aaff;
}

.logo-box {
    position: absolute;
    left: 0;
    top: 65px;
    width: 175px;
    height: 186px;
    padding: 11px 0 0 6px;
    background-color: #e6e6e6;
}

.logo-box svg {
    display: block;
}

.mark text { font: 700 10px "Open Sans", sans-serif; letter-spacing: 3px; fill: #f8f8f8; }
.logo-word { font: 700 26px "Liberation Sans", sans-serif; fill: #0a0a0a; }

.intro {
    padding-top: 6px;
    text-align: center;
    white-space: nowrap;
}

.intro h1 {
    margin: 0 0 -1px;
    font-size: 22.400px;
    line-height: 34px;
    font-weight: 700;
}

.intro p.tagline {
    padding-left: 4px;
    font-size: 20.700px;
    line-height: 24px;
    font-style: italic;
}

.intro h2 {
    margin: 20px 0 1px;
    font-size: 19.800px;
    line-height: 26px;
    font-weight: 700;
}

.intro h2.objective {
    margin-top: 80px;
}

.intro p {
    margin: 0;
    padding-left: 10px;
    font-size: 16.900px;
    line-height: 23.500px;
}

.dot {
    font-size: 12px;
    line-height: 0;
    vertical-align: 1px;
}

/* page tabs */
.pagebar {
    height: 35px;
    flex: none;
    display: flex;
    background-color: #f3f2f1;
}

.pagebar-tools {
    width: 127px;
    flex: none;
    display: flex;
    padding-left: 10px;
}

.device {
    display: flex;
    justify-content: center;
}

.device.on {
    width: 24px;
    margin-right: 26px;
    padding-top: 7px;
    height: 31px;
    border-bottom: 3px solid #117865;
}

.device.phone {
    margin-right: 21px;
    padding-top: 5px;
}

.nav-tri {
    width: 0;
    height: 0;
    margin-top: 12px;
    border-top: 5px solid transparent;
    border-bottom: 5px solid transparent;
}

.nav-tri.left {
    border-right: 5px solid #d2d0ce;
}

.nav-tri.right {
    margin-left: 18px;
    border-left: 5px solid #d2d0ce;
}

.ptab {
    display: flex;
    align-items: center;
    justify-content: center;
    height: 35px;
    padding-top: 1px;
    background-color: #fff;
    border-left: 1px solid #c8c6c4;
    border-bottom: 1px solid #e1dfdd;
    font-size: 11.200px;
    white-space: nowrap;
}

.ptab.active {
    font-weight: 600;
    border-bottom: 4px solid #117865;
    padding-top: 4px;
}

.t1 { width: 110px; }
.t2 { width: 142px; }
.t3 { width: 139px; }
.t4 { width: 113px; }
.t5 { width: 137px; }
.t6 { width: 120px; }
.t7 { width: 128px; }
.t8 { width: 90px; }

.hid {
    margin-right: 4px;
    margin-top: 3px;
}

.ptab-add {
    width: 39px;
    height: 35px;
    line-height: 31px;
    text-align: center;
    font-size: 22px;
    font-weight: 700;
    color: #fff;
    background-color: #117865;
}

/* filters */
.filters {
    width: 34px;
    flex: none;
    display: flex;
    flex-direction: column;
    align-items: center;
    padding-top: 13px;
    background-color: #fff;
    border-left: 1px solid #b3b0ad;
}

.funnel {
    margin-top: 15px;
}

.filters-text {
    margin-top: 6px;
    writing-mode: vertical-rl;
    font-size: 15px;
    font-weight: 600;
}

/* visualizations */
.viz {
    width: 181px;
    flex: none;
    border-left: 1px solid #e1dfdd;
    border-right: 1px solid #e1dfdd;
    background-color: #f3f2f1;
}

.pane-head {
    height: 38px;
    display: flex;
    align-items: center;
    justify-content: space-between;
    padding: 0 8px 0 7px;
    font-size: 14.500px;
    font-weight: 600;
    color: #252423;
}

.build-label {
    height: 19px;
    line-height: 16px;
    padding-left: 7px;
    font-size: 11px;
    font-weight: 600;
}

.build-tabs {
    display: flex;
    gap: 33px;
    padding-left: 7px;
}

.bt {
    width: 32px;
    height: 32px;
    display: flex;
    align-items: center;
    justify-content: center;
}

.bt.on {
    background-color: #cfcfcf;
}

.build-rule {
    position: relative;
    height: 12px;
    border-bottom: 1px solid #a19f9d;
}

.notch {
    position: absolute;
    left: 17px;
    top: 6px;
    width: 11px;
    height: 11px;
    background-color: #f3f2f1;
    border-left: 1px solid #a19f9d;
    border-top: 1px solid #a19f9d;
    transform: rotate(45deg);
}

.viz-grid {
    display: grid;
    grid-template-columns: repeat(6, 28px);
    grid-auto-rows: 28px;
    align-items: center;
    justify-items: center;
    height: 234px;
    padding: 6px 0 0 4px;
    border-bottom: 1px solid #e1dfdd;
}

.viz-grid svg {
    width: 19px;
    height: 19px;
}

.num { font: 400 6.500px "Open Sans", sans-serif; fill: #2b88d8; text-anchor: middle; }
.num.big { font-size: 8px; }
.lang { font: 700 16px "Open Sans", sans-serif; fill: #2b88d8; text-anchor: middle; }
.lang.py { font-size: 15px; }

.wells {
    padding: 0 6px 0 4px;
}

.well-title {
    padding: 11px 0 6px 7px;
    line-height: 16px;
    font-size: 11.200px;
}

.well {
    height: 27px;
    line-height: 25px;
    padding-left: 9px;
    background-color: #fff;
    border: 1px dashed #c8c6c4;
    font-size: 11.300px;
}

.well.small {
    height: 25px;
    line-height: 23px;
    margin-top: 6px;
    padding-left: 7px;
}

.drill-title {
    margin-top: 10px;
    padding-left: 7px;
    line-height: 16px;
    font-size: 11.500px;
    font-weight: 600;
}

.opt {
    display: flex;
    align-items: center;
    justify-content: space-between;
    height: 27px;
    padding: 0 16px 0 7px;
    font-size: 11.200px;
}

.drill-title + .opt {
    margin-top: 4px;
}

.toggle {
    width: 32px;
    height: 16px;
    display: flex;
    align-items: center;
    gap: 2px;
    padding: 0 3px;
    border-radius: 8px;
    font-size: 9px;
}

.toggle i {
    width: 9px;
    height: 9px;
    border-radius: 50%;
}

.toggle.off {
    background-color: #fff;
    border: 1px solid #8a8886;
    color: #605e5c;
}

.toggle.off i {
    background-color: #605e5c;
}

.toggle.on {
    justify-content: flex-end;
    background-color: #117865;
    color: #fff;
}

.toggle.on i {
    background-color: #fff;
}

/* data pane */
.data {
    flex: 1;
    background-color: #f3f2f1;
}

.data .pane-head {
    padding-left: 9px;
    padding-right: 4px;
}

.search {
    display: flex;
    align-items: center;
    gap: 6px;
    height: 23px;
    margin: 7px 0 0 5px;
    padding-left: 12px;
    background-color: #fff;
    border: 1px solid #c8c6c4;
    border-bottom-color: #8a8886;
    border-right: none;
    border-radius: 3px 0 0 3px;
    color: #605e5c;
    font-size: 12px;
}

.tables {
    margin: 10px 0 0;
    padding: 0;
    list-style: none;
}

.tables li {
    display: flex;
    align-items: center;
    height: 24px;
    padding-left: 17px;
    font-size: 11px;
    color: #323130;
}

.tables svg {
    margin-right: 5px;
}

.tchev {
    width: 7px;
    height: 7px;
    margin: 0 8px 0 -3px;
    border-right: 1px solid #605e5c;
    border-top: 1px solid #605e5c;
    transform: rotate(45deg);
}

/* status bar */
.status {
    flex: 1;
    display: flex;
    align-items: center;
    border-top: 1px solid #e1dfdd;
    background-color: #f3f2f1;
    font-size: 11px;
    color: #323130;
}

.page-count {
    margin-left: -2px;
}

.zoom {
    display: flex;
    align-items: center;
    margin-left: auto;
    margin-right: 13px;
}

.z-sign {
    font-size: 14px;
    line-height: 14px;
    color: #605e5c;
}

.slider {
    position: relative;
    display: block;
    width: 100px;
    height: 1px;
    margin: 0 6px 0 2px;
    background-color: #605e5c;
}

.slider i {
    position: absolute;
    left: 50px;
    top: -5px;
    width: 4px;
    height: 11px;
    background-color: #605e5c;
}

.z-val {
    margin: 0 13px 0 14px;
    color: #605e5c;
}
```
